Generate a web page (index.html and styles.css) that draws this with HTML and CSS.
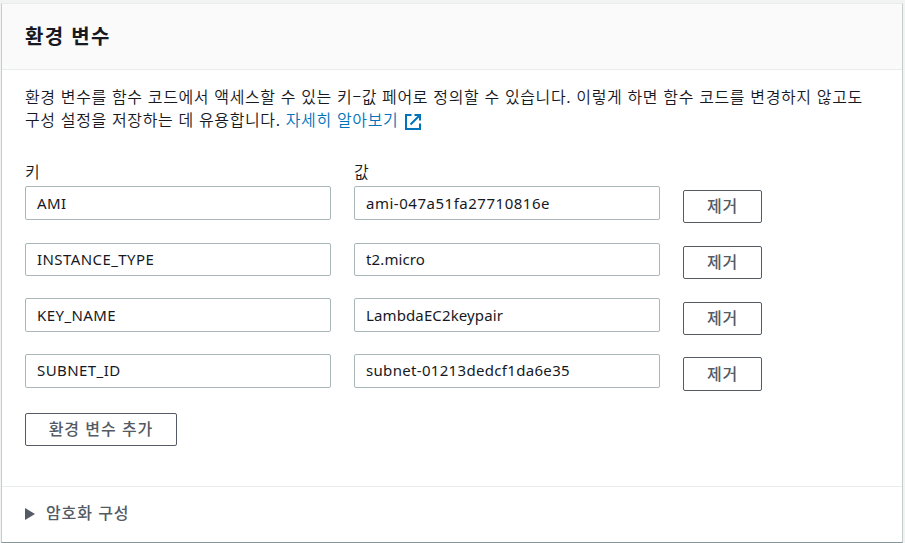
FILE: index.html
```html
<!DOCTYPE html>
<html lang="ko">
<head>
<meta charset="utf-8">
<title>환경 변수</title>
<link rel="stylesheet" href="styles.css">
</head>
<body>
<section class="card">
  <header class="card-header"><h2>환경 변수</h2></header>
  <div class="card-body">
    <p class="intro">환경 변수를 함수 코드에서 액세스할 수 있는 키–값 페어로 정의할 수 있습니다. 이렇게 하면 함수 코드를 변경하지 않고도<br>구성 설정을 저장하는 데 유용합니다. <a class="link">자세히 알아보기<svg class="external" viewBox="0 0 16 16" width="16" height="16" fill="none" stroke="currentColor" stroke-width="2"><path d="M6.5 1H1v14h14V9.5M9.5 1H15v5.5M15 1L5.5 10.5"/></svg></a></p>
    <div class="labels"><span>키</span><span>값</span></div>
    <div class="row first"><div class="field key">AMI</div><div class="field wide">ami-047a51fa27710816e</div><button class="button">제거</button></div>
    <div class="row even"><div class="field key">INSTANCE_TYPE</div><div class="field">t2.micro</div><button class="button">제거</button></div>
    <div class="row"><div class="field key">KEY_NAME</div><div class="field">LambdaEC2keypair</div><button class="button">제거</button></div>
    <div class="row even"><div class="field key">SUBNET_ID</div><div class="field id">subnet-01213dedcf1da6e35</div><button class="button">제거</button></div>
    <button class="button add">환경 변수 추가</button>
  </div>
  <footer class="card-footer"><svg class="caret" viewBox="0 0 10 12" width="10" height="12"><path d="M0 0L10 6L0 12Z" fill="currentColor"/></svg><span>암호화 구성</span></footer>
</section>
</body>
</html>
```
FILE: styles.css
```css
* { box-sizing: border-box; }
body {
  margin: 0;
  padding: 3px 2px 0 1px;
  height: 543px;
  overflow: hidden;
  background: #f2f3f3;
  color: #16191f;
  font-family: "Noto Sans", "Noto Sans CJK KR", sans-serif;
  font-size: 15px;
}
.card {
  height: 540px;
  display: flex;
  flex-direction: column;
  background: #fff;
  border: 1px solid #c5cccc;
  border-top-color: #eaeded;
  border-bottom-color: #879596;
}
.card-header {
  height: 66px;
  padding: 0 0 2px 23px;
  display: flex;
  align-items: center;
  background: #fafafa;
  border-bottom: 1px solid #eaeded;
}
h2 {
  margin: 0;
  font-family: "Noto Sans CJK KR", sans-serif;
  font-size: 20px;
  line-height: 30px;
  font-weight: 700;
  letter-spacing: 1.3px;
}
.card-body { height: 416px; padding: 15px 23px 0; }
.intro {
  margin: 0;
  height: 71px;
  font-family: "Noto Sans CJK KR", sans-serif;
  font-size: 16px;
  font-weight: 350;
  line-height: 23px;
  letter-spacing: 0.63px;
  white-space: nowrap;
}
.link { color: #0073bb; }
.external { margin-left: 7px; vertical-align: -4px; }
.labels {
  display: grid;
  grid-template-columns: 306px 306px;
  column-gap: 23px;
  height: 30.3px;
  padding-top: 4px;
  font-family: "Noto Sans CJK KR", sans-serif;
  font-weight: 350;
  font-size: 16px;
  line-height: 22px;
}
.row {
  display: grid;
  grid-template-columns: 306px 306px 79px;
  column-gap: 23px;
  align-items: start;
  height: 55.9px;
}
.row.first { height: 56.25px; }
.field {
  height: 33.4px;
  padding-left: 11px;
  border: 1px solid #aab7b8;
  border-radius: 2px;
  line-height: 32px;
  letter-spacing: 0.12px;
  white-space: nowrap;
}
.row.even .field { line-height: 31.4px; }
.field.key { letter-spacing: 0.42px; }
.field.wide { letter-spacing: 0.52px; }
.field.id { letter-spacing: 0.32px; }
.button {
  height: 33.3px;
  margin: 3.1px 0 0;
  padding: 0 0 2px;
  border: 1px solid #545b64;
  border-radius: 2px;
  background: #fff;
  color: #545b64;
  font-family: "Noto Sans CJK KR", sans-serif;
  font-size: 16px;
  font-weight: 500;
  line-height: 27px;
  letter-spacing: 0.9px;
}
.row.first .button { margin-top: 3.7px; }
.button.add { display: block; width: 152px; height: 33px; }
.card-footer {
  height: 56px;
  padding: 0 0 5px 23px;
  display: flex;
  align-items: center;
  gap: 11px;
  border-top: 1px solid #eaeded;
  color: #545b64;
  font-family: "Noto Sans CJK KR", sans-serif;
  font-size: 16px;
  font-weight: 500;
  letter-spacing: 0.9px;
}
.caret { margin-top: 4px; }
```
